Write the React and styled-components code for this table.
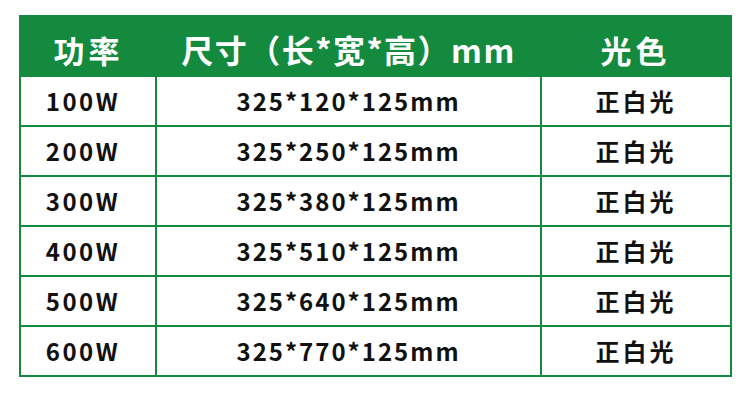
import React from "react";
import styled, { createGlobalStyle } from "styled-components";

const GREEN = "#138a3e";

const Global = createGlobalStyle`
  html, body { margin: 0; padding: 0; background: #ffffff; }
  body { font-family: "Noto Sans CJK SC", "Noto Sans", sans-serif; }
`;

const Page = styled.div`
  width: 750px;
  height: 406px;
  padding: 15px 0 0 19px;
  box-sizing: border-box;
  background: #fff;
`;

const Table = styled.table`
  border-collapse: collapse;
  width: 711px;
  table-layout: fixed;
  border: 2px solid ${GREEN};
`;

const HeadRow = styled.tr`
  background: ${GREEN};
  height: 60px;
`;

const HeadCell = styled.th`
  padding: 6px 0 0;
  color: #ffffff;
  font-family: "Noto Sans CJK SC", sans-serif;
  font-weight: 700;
  font-size: ${(p) => p.$fs || 31}px;
  letter-spacing: ${(p) => p.$ls || 2}px;
  text-align: center;
  vertical-align: middle;
  border: 0;
  line-height: 1;
`;

const Row = styled.tr`
  height: 50px;
`;

const Cell = styled.td`
  border: 2px solid ${GREEN};
  padding: 0 ${(p) => p.$pr || 0}px 0 0;
  color: #111111;
  font-family: "Noto Sans CJK SC", sans-serif;
  font-weight: 700;
  font-size: 24px;
  letter-spacing: ${(p) => p.$ls || 1}px;
  text-align: center;
  vertical-align: middle;
  line-height: 1;
`;

const rows = [
  ["100W", "325*120*125mm"],
  ["200W", "325*250*125mm"],
  ["300W", "325*380*125mm"],
  ["400W", "325*510*125mm"],
  ["500W", "325*640*125mm"],
  ["600W", "325*770*125mm"],
];

export default function App() {
  return (
    <>
      <Global />
      <Page>
        <Table>
          <colgroup>
            <col style={{ width: 136 }} />
            <col style={{ width: 385 }} />
            <col style={{ width: 190 }} />
          </colgroup>
          <thead>
            <HeadRow>
              <HeadCell $ls={4}>功率</HeadCell>
              <HeadCell $ls={1.5} $fs={32}>尺寸（长*宽*高）mm</HeadCell>
              <HeadCell $ls={4}>光色</HeadCell>
            </HeadRow>
          </thead>
          <tbody>
            {rows.map(([p, s]) => (
              <Row key={p}>
                <Cell $ls={2.5} $pr={10}>{p}</Cell>
                <Cell $ls={2}>{s}</Cell>
                <Cell $ls={3}>正白光</Cell>
              </Row>
            ))}
          </tbody>
        </Table>
      </Page>
    </>
  );
}
